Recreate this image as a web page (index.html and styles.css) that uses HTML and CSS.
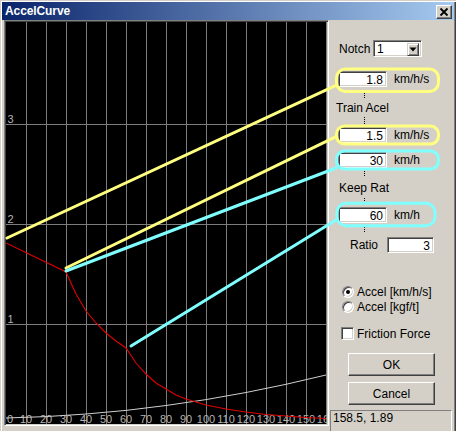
FILE: index.html
```html
<!DOCTYPE html>
<html>
<head>
<meta charset="utf-8">
<title>AccelCurve</title>
<link rel="stylesheet" href="styles.css">
</head>
<body>
<div class="window">
  <div class="titlebar">
    <span class="title">AccelCurve</span>
    <span class="close"><svg width="14" height="12" viewBox="0 0 14 12"><path d="M3.5 2.5 L10.5 9.5 M10.5 2.5 L3.5 9.5" stroke="#000" stroke-width="1.8" fill="none"/></svg></span>
  </div>
  <div class="client">
    <div class="chart">
      <svg class="plot" width="321" height="402" viewBox="0 0 321 402">
        <rect width="321" height="402" fill="#000"/>
        <g stroke="#7c7c7c" stroke-width="1" shape-rendering="crispEdges">
          <line x1="20.5" y1="0" x2="20.5" y2="402"/>
          <line x1="40.5" y1="0" x2="40.5" y2="402"/>
          <line x1="60.5" y1="0" x2="60.5" y2="402"/>
          <line x1="80.5" y1="0" x2="80.5" y2="402"/>
          <line x1="100.5" y1="0" x2="100.5" y2="402"/>
          <line x1="120.5" y1="0" x2="120.5" y2="402"/>
          <line x1="140.5" y1="0" x2="140.5" y2="402"/>
          <line x1="160.5" y1="0" x2="160.5" y2="402"/>
          <line x1="180.5" y1="0" x2="180.5" y2="402"/>
          <line x1="200.5" y1="0" x2="200.5" y2="402"/>
          <line x1="220.5" y1="0" x2="220.5" y2="402"/>
          <line x1="240.5" y1="0" x2="240.5" y2="402"/>
          <line x1="260.5" y1="0" x2="260.5" y2="402"/>
          <line x1="280.5" y1="0" x2="280.5" y2="402"/>
          <line x1="300.5" y1="0" x2="300.5" y2="402"/>
          <line x1="320.5" y1="0" x2="320.5" y2="402"/>
          <line x1="0" y1="102.5" x2="321" y2="102.5"/>
          <line x1="0" y1="202.5" x2="321" y2="202.5"/>
          <line x1="0" y1="302.5" x2="321" y2="302.5"/>
        </g>
        <g class="axis" fill="#b4b4b4" font-size="11">
          <text x="1.5" y="101">3</text>
          <text x="1.5" y="201">2</text>
          <text x="1.5" y="301">1</text>
        </g>
        <g class="axis" fill="#b4b4b4" font-size="11" text-anchor="middle">
          <text x="4" y="401">0</text>
          <text x="20" y="401">10</text>
          <text x="40" y="401">20</text>
          <text x="60" y="401">30</text>
          <text x="80" y="401">40</text>
          <text x="100" y="401">50</text>
          <text x="120" y="401">60</text>
          <text x="140" y="401">70</text>
          <text x="160" y="401">80</text>
          <text x="180" y="401">90</text>
          <text x="200" y="401">100</text>
          <text x="220" y="401">110</text>
          <text x="240" y="401">120</text>
          <text x="260" y="401">130</text>
          <text x="280" y="401">140</text>
          <text x="300" y="401">150</text>
          <text x="320" y="401">160</text>
        </g>
        <polyline fill="none" stroke="#cfcfcf" stroke-width="1" points="0,396 40,394.6 80,392 120,388.4 160,383.5 200,377.6 240,370.5 280,362.3 320,353"/>
        <polyline fill="none" stroke="#e00000" stroke-width="1.1" points="0,221 60,250 70,272 80,289 90,301 100,311 110,319 120,326 130,341 140,352 150,361 160,367 170,373 180,377 200,383 220,387 240,390 260,392.5 280,394 300,395.5 320,396.5"/>
      </svg>
    </div>
    <div class="panel">
      <div class="notch-row">
        <span class="notch-label">Notch</span>
        <div class="combo">
          <span class="combo-val">1</span>
          <span class="combo-btn"><svg width="8" height="5" viewBox="0 0 8 5"><path d="M0.5 0.5 H7.5 L4 4.5 Z" fill="#000"/></svg></span>
        </div>
      </div>
      <div class="field f1"><div class="edit">1.8</div><span class="unit">km/h/s</span></div>
      <div class="tick tk1"></div>
      <div class="group-label">Train Acel</div>
      <div class="tick tk2"></div>
      <div class="field"><div class="edit">1.5</div><span class="unit">km/h/s</span></div>
      <div class="field f3"><div class="edit">30</div><span class="unit">km/h</span></div>
      <div class="tick tk3"></div>
      <div class="group-label keep">Keep Rat</div>
      <div class="tick tk4"></div>
      <div class="field"><div class="edit">60</div><span class="unit">km/h</span></div>
      <div class="tick tk5"></div>
      <div class="ratio-row"><span class="ratio-label">Ratio</span><div class="edit ratio">3</div></div>
      <div class="opt-row r1"><span class="radio checked"></span><span class="opt-text">Accel [km/h/s]</span></div>
      <div class="opt-row r2"><span class="radio"></span><span class="opt-text">Accel [kgf/t]</span></div>
      <div class="opt-row chk"><span class="check"></span><span class="opt-text">Friction Force</span></div>
      <div class="btn ok">OK</div>
      <div class="btn cancel">Cancel</div>
      <div class="status">158.5, 1.89</div>
    </div>
  </div>
  <svg class="overlay" width="456" height="431" viewBox="0 0 456 431">
    <g fill="none" stroke-width="3" stroke-linecap="round">
      <line x1="7" y1="238" x2="336" y2="85.3" stroke="#ffff80"/>
      <line x1="66" y1="268" x2="336" y2="136.6" stroke="#ffff80"/>
      <line x1="66" y1="271" x2="336" y2="168" stroke="#80ffff"/>
      <line x1="131" y1="346" x2="336" y2="220" stroke="#80ffff"/>
      <rect x="336.5" y="69" width="102" height="22.5" rx="9" stroke="#ffff80"/>
      <rect x="336.5" y="126" width="102" height="18" rx="8" stroke="#ffff80"/>
      <rect x="336.5" y="151" width="102" height="18" rx="8" stroke="#80ffff"/>
      <rect x="337" y="203.3" width="98" height="22.4" rx="9" stroke="#80ffff"/>
    </g>
  </svg>
</div>
</body>
</html>
```

FILE: styles.css
```css
* {
  box-sizing: border-box;
}

html, body {
  margin: 0;
  padding: 0;
}

body {
  width: 456px;
  height: 431px;
  overflow: hidden;
  background: #d4d0c8;
  font-family: "Liberation Sans", Arial, sans-serif;
  font-size: 12px;
  color: #000;
}

.window {
  position: relative;
  width: 456px;
  height: 431px;
  background: #d4d0c8;
  padding: 2px 2px 0 2px;
  box-shadow: inset 1px 1px 0 #d4d0c8, inset 2px 2px 0 #ffffff, inset -1px 0 0 #404040, inset -2px 0 0 #808080;
  display: flex;
  flex-direction: column;
}

.titlebar {
  height: 18px;
  flex: none;
  display: flex;
  align-items: center;
  padding-left: 3px;
  background: linear-gradient(to right, #0a246a, #a6caf0);
  color: #fff;
  font-weight: bold;
  font-size: 12px;
}

.title {
  letter-spacing: -0.1px;
}

.close {
  margin-left: auto;
  margin-right: 2px;
  margin-top: 1px;
  width: 16px;
  height: 14px;
  background: #d4d0c8;
  border: 1px solid;
  border-color: #fff #404040 #404040 #fff;
  box-shadow: inset -1px -1px 0 #808080;
  display: flex;
  align-items: center;
  justify-content: center;
}

.close svg {
  display: block;
}

.client {
  flex: 1;
  display: flex;
  align-items: flex-start;
}

.chart {
  flex: none;
  margin-left: 2px;
  width: 325px;
  height: 406px;
  border: 1px solid;
  border-color: #808080 #fff #fff #808080;
  padding: 1px;
  box-shadow: inset 1px 1px 0 #404040, inset -1px -1px 0 #d4d0c8;
}

.plot {
  display: block;
}

.axis {
  font-family: "Liberation Sans", Arial, sans-serif;
}

.panel {
  flex: 1;
  display: flex;
  flex-direction: column;
  align-items: flex-start;
}

.notch-row {
  margin-top: 20px;
  height: 17px;
  display: flex;
  align-items: center;
}

.notch-label {
  margin-left: 10px;
  width: 34px;
}

.combo {
  width: 49px;
  height: 17px;
  border: 1px solid;
  border-color: #808080 #fff #fff #808080;
  box-shadow: inset 1px 1px 0 #404040, inset -1px -1px 0 #d4d0c8;
  background: #fff;
  padding: 2px 2px 1px 2px;
  display: flex;
  align-items: center;
}

.combo-val {
  flex: 1;
  line-height: 12px;
  padding-left: 1px;
}

.combo-btn {
  width: 12px;
  height: 13px;
  background: #d4d0c8;
  border: 1px solid;
  border-color: #d4d0c8 #404040 #404040 #d4d0c8;
  box-shadow: inset 1px 1px 0 #fff, inset -1px -1px 0 #808080;
  display: flex;
  align-items: center;
  justify-content: center;
}

.combo-btn svg {
  display: block;
}

.field {
  height: 16px;
  display: flex;
  align-items: center;
  margin-left: 9px;
}

.f1 {
  margin-top: 14px;
}

.f3 {
  margin-top: 9px;
}

.edit {
  width: 49px;
  height: 16px;
  border: 1px solid;
  border-color: #808080 #fff #fff #808080;
  box-shadow: inset 1px 1px 0 #404040, inset -1px -1px 0 #d4d0c8;
  background: #fff;
  text-align: right;
  padding: 2px 3px 0 2px;
  line-height: 12px;
}

.unit {
  margin-left: 7px;
}

.tick {
  margin-left: 35px;
  width: 0;
  height: 5px;
  border-left: 1px dotted #000;
}

.tk1 { margin-top: 6px; margin-bottom: 3px; }
.tk2 { margin-top: 2px; height: 7px; margin-bottom: 3px; }
.tk3 { margin-top: 3px; margin-bottom: 5px; }
.tk4 { margin-top: 3px; margin-bottom: 4px; }
.tk5 { margin-top: 4px; margin-bottom: 5px; }

.group-label {
  height: 14px;
  line-height: 14px;
  margin-left: 7px;
}

.group-label.keep {
  margin-left: 10px;
}

.ratio-row {
  height: 16px;
  display: flex;
  align-items: center;
  margin-left: 21px;
}

.ratio-label {
  width: 37px;
}

.edit.ratio {
  width: 47px;
}

.opt-row {
  display: flex;
  align-items: center;
  height: 12px;
}

.r1 {
  margin-top: 33px;
  margin-left: 13px;
}

.r2 {
  margin-top: 3px;
  margin-left: 13px;
}

.chk {
  margin-top: 14px;
  height: 13px;
  margin-left: 12px;
}

.opt-text {
  margin-left: 3px;
  line-height: 12px;
}

.chk .opt-text {
  margin-left: 3px;
}

.radio {
  width: 12px;
  height: 12px;
  border-radius: 50%;
  border: 1px solid;
  border-color: #808080 #fff #fff #808080;
  box-shadow: inset 1px 1px 0 #404040, inset -1px -1px 0 #d4d0c8;
  background: #fff;
  display: flex;
  align-items: center;
  justify-content: center;
}

.radio.checked::after {
  content: "";
  width: 4px;
  height: 4px;
  border-radius: 50%;
  background: #000;
}

.check {
  width: 13px;
  height: 13px;
  border: 1px solid;
  border-color: #808080 #fff #fff #808080;
  box-shadow: inset 1px 1px 0 #404040, inset -1px -1px 0 #d4d0c8;
  background: #fff;
}

.btn {
  margin-left: 19px;
  width: 87px;
  height: 23px;
  border: 1px solid;
  border-color: #fff #404040 #404040 #fff;
  box-shadow: inset -1px -1px 0 #808080;
  background: #d4d0c8;
  display: flex;
  align-items: center;
  justify-content: center;
}

.ok {
  margin-top: 13px;
}

.cancel {
  margin-top: 6px;
}

.status {
  margin-top: 5px;
  margin-left: 1px;
  width: 122px;
  height: 25px;
  border: 1px solid;
  border-color: #808080 #fff #fff #808080;
  padding-left: 2px;
  line-height: 14px;
}

.overlay {
  position: absolute;
  left: 0;
  top: 0;
  pointer-events: none;
}
```
